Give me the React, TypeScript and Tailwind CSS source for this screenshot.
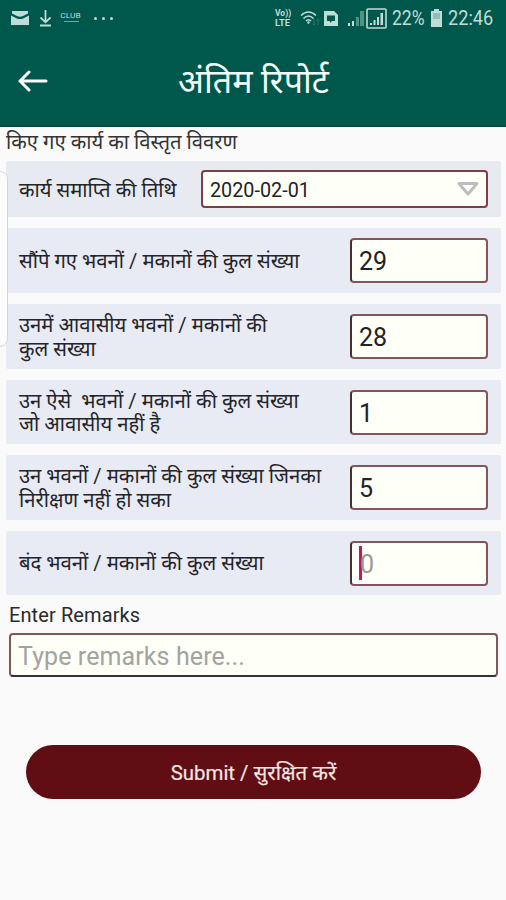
import React from "react";

type RowProps = { lines: string[]; value: string; h: string; focused?: boolean };

function CountRow({ lines, value, h, focused }: RowProps) {
  return (
    <div className={`flex items-center justify-between rounded-[2px] bg-[#e8eaf4] pl-[13px] pr-[13px] ${h}`}>
      <div className="pt-[2px] text-[20.25px] leading-[23.5px] text-[#242428]">
        {lines.map((l) => (
          <div key={l} className="whitespace-pre">{l}</div>
        ))}
      </div>
      <div className="flex h-[45px] w-[138px] items-center rounded-[4px] border-2 border-[#84555b] border-l-[#453034] bg-[#fefff7] pl-[7px] pt-[3px] text-[25px] text-[#222]">
        {focused && <span className="-mr-[2px] mb-[3px] h-[34px] w-[3px] bg-[#c2185b]" />}
        <span className={focused ? "text-[#999]" : ""}>{value}</span>
      </div>
    </div>
  );
}

function StatusBar() {
  return (
    <div className="flex h-[36px] items-center text-[#c0dcd6]">
      <svg className="ml-[11px] h-[16px] w-[18px]" viewBox="0 0 18 16">
        <path d="M1 1H17V3.500L12 6Q9 7.500 6 6L1 3.500Z" fill="currentColor" />
        <path d="M0 5.500L6 8.500Q9 9.500 12 8.500L18 5.500V15H0Z" fill="currentColor" />
      </svg>
      <svg className="ml-[10px] h-[18px] w-[13px]" viewBox="0 0 13 18" fill="none" stroke="currentColor" strokeWidth="1.8">
        <path d="M6.5 1V13M1.5 8.5L6.5 13.3L11.5 8.5M1 16.5H12" />
      </svg>
      <div className="ml-[8px] flex w-[22px] flex-col items-center pb-[3px]">
        <span className="scale-x-[1.2] text-[7px] leading-[8px]">CLUB</span>
        <span className="mt-px h-px w-[15px] bg-[#6fa79c]" />
      </div>
      <div className="ml-[12px] flex gap-[5px]">
        <i className="size-[3px] rounded-full bg-current" />
        <i className="size-[3px] rounded-full bg-current" />
        <i className="size-[3px] rounded-full bg-current" />
      </div>
      <div className="ml-auto mr-[11px] flex items-center">
        <div className="w-[18px] text-[8.5px] font-bold">
          <div className="leading-[10px]">Vo))</div>
          <div className="origin-left scale-x-[1.1] leading-[10px]">LTE</div>
        </div>
        <svg className="ml-[7px] h-[18px] w-[22px]" viewBox="0 0 22 18" fill="none" stroke="currentColor" strokeWidth="1.6">
          <path d="M1 6.5Q8.500 -.5 16 6.500M3.500 9.500Q8.500 4.500 13.500 9.500M6 12Q8.500 9.500 11 12" />
          <circle cx="8.500" cy="13.500" r="1.200" fill="currentColor" stroke="none" />
          <path d="M14 10v6M12.500 14.500l1.500 1.500 1.500-1.500M18 16v-6M16.500 11.500L18 10l1.500 1.500" stroke="#2c796b" strokeWidth="1" />
        </svg>
        <svg className="ml-px h-[17px] w-[16px]" viewBox="0 0 16 17">
          <path d="M1 1H11L15 5V16H1Z" fill="currentColor" />
          <path d="M4 5.500H12V11H9L7 13V11H4Z" fill="#00574b" />
        </svg>
        <svg className="ml-[8px] h-[18px] w-[18px]" viewBox="0 0 18 18">
          <path d="M1 14h2v3H1ZM5 12h2v5H5Z" fill="currentColor" />
          <path d="M9 8h3v9H9ZM13 2h4v15h-4Z" fill="#4f9385" />
        </svg>
        <svg className="ml-px h-[21px] w-[21px]" viewBox="0 0 21 21">
          <rect x="1" y="1" width="19" height="19" rx="1" fill="none" stroke="currentColor" strokeWidth="1.600" />
          <path d="M4 15h2v2H4ZM7.500 12h2v5h-2ZM11 9h2v8h-2ZM14.500 5h2.500v12h-2.500Z" fill="currentColor" />
        </svg>
        <span className="ml-[5px] w-[34px] origin-left scale-x-[0.9] whitespace-nowrap pt-px text-[19.5px]">22%</span>
        <svg className="ml-[4px] h-[18px] w-[13px]" viewBox="0 0 13 18">
          <path d="M4 0h5v2h3v16H1V2h3Z" fill="currentColor" />
          <path d="M3 4h7v6H3Z" fill="#93beb5" />
        </svg>
        <span className="ml-[5px] w-[47px] origin-left scale-x-[0.93] whitespace-nowrap pt-px text-[19.5px]">22:46</span>
      </div>
    </div>
  );
}

export default function App() {
  return (
    <div className="relative flex h-[900px] w-[506px] flex-col overflow-hidden bg-[#fafafa] font-[Roboto,'Noto_Sans','Noto_Sans_Devanagari',sans-serif]">
      <header className="h-[127px] shrink-0 border-b border-[#003f35] bg-[#00574b]">
        <StatusBar />
        <div className="flex h-[90px] items-center">
          <svg className="ml-[18px] h-[22px] w-[30px]" viewBox="0 0 30 22" fill="none" stroke="white" strokeWidth="3" strokeLinecap="round" strokeLinejoin="round">
            <path d="M11 2L2 11L11 20M2 11H28" />
          </svg>
          <h1 className="ml-[130px] whitespace-nowrap text-[34px] font-normal text-[#f4fffb]">अंतिम रिपोर्ट</h1>
        </div>
      </header>

      <div className="flex h-[34px] shrink-0 items-center pl-[6px] pb-[3px] text-[20.25px] text-[#333]">
        <span className="whitespace-nowrap">किए गए कार्य का विस्तृत विवरण</span>
      </div>

      <main className="flex flex-col gap-[11px] pl-[6px] pr-[5px]">
        <div className="flex h-[56px] items-center justify-between rounded-[2px] bg-[#e8eaf1] px-[13px]">
          <span className="whitespace-nowrap pt-[2px] text-[20.25px] text-[#242428]">कार्य समाप्ति की तिथि</span>
          <div className="flex h-[38px] w-[287px] items-center justify-between rounded-[4px] border-2 border-[#7d3e47] bg-[#fefff7] pl-[7px] pr-[7px] text-[19.8px] text-[#222]">
            <span className="pt-[3px]">2020-02-01</span>
            <svg className="h-[16px] w-[22px]" viewBox="0 0 22 16">
              <path d="M2 2.500H20L11 13Z" fill="#fff" stroke="#bdbdbd" strokeWidth="3" strokeLinejoin="round" />
            </svg>
          </div>
        </div>
        <CountRow h="h-[65px]" lines={["सौंपे गए भवनों / मकानों की कुल संख्या"]} value="29" />
        <CountRow h="h-[65px]" lines={["उनमें आवासीय भवनों / मकानों की", "कुल संख्या"]} value="28" />
        <CountRow h="h-[64px]" lines={["उन ऐसे  भवनों / मकानों की कुल संख्या", "जो आवासीय नहीं है"]} value="1" />
        <CountRow h="h-[65px]" lines={["उन भवनों / मकानों की कुल संख्या जिनका", "निरीक्षण नहीं हो सका"]} value="5" />
        <CountRow h="h-[64px]" lines={["बंद भवनों / मकानों की कुल संख्या"]} value="0" focused />
      </main>

      <section className="pl-[9px] pr-[8px] pt-[6px]">
        <label className="block text-[20px] leading-[28px] tracking-[0.1px] text-[#2a2a2a]">Enter Remarks</label>
        <div className="mt-[4px] flex h-[44px] items-center rounded-[4px] border-2 border-[#84555b] border-b-[#333] bg-[#fefff7] pl-[7px] pt-[3px] text-[25px] tracking-[0.1px] text-[#a3a3a0]">
          Type remarks here...
        </div>
      </section>

      <button className="mx-[26px] mt-[68px] flex h-[54px] w-[455px] items-center justify-center rounded-full bg-[#610d14] pt-[3px] text-[#f3e6e3]">
        <span className="whitespace-nowrap text-[20.4px] [-webkit-text-stroke:0.2px_currentColor]">Submit / सुरक्षित करें</span>
      </button>

      <div className="absolute -left-[4px] top-[171px] h-[176px] w-[12px] rounded-r-[8px] border border-[#d6d6d8] bg-[#fcfcfc]" />
    </div>
  );
}
